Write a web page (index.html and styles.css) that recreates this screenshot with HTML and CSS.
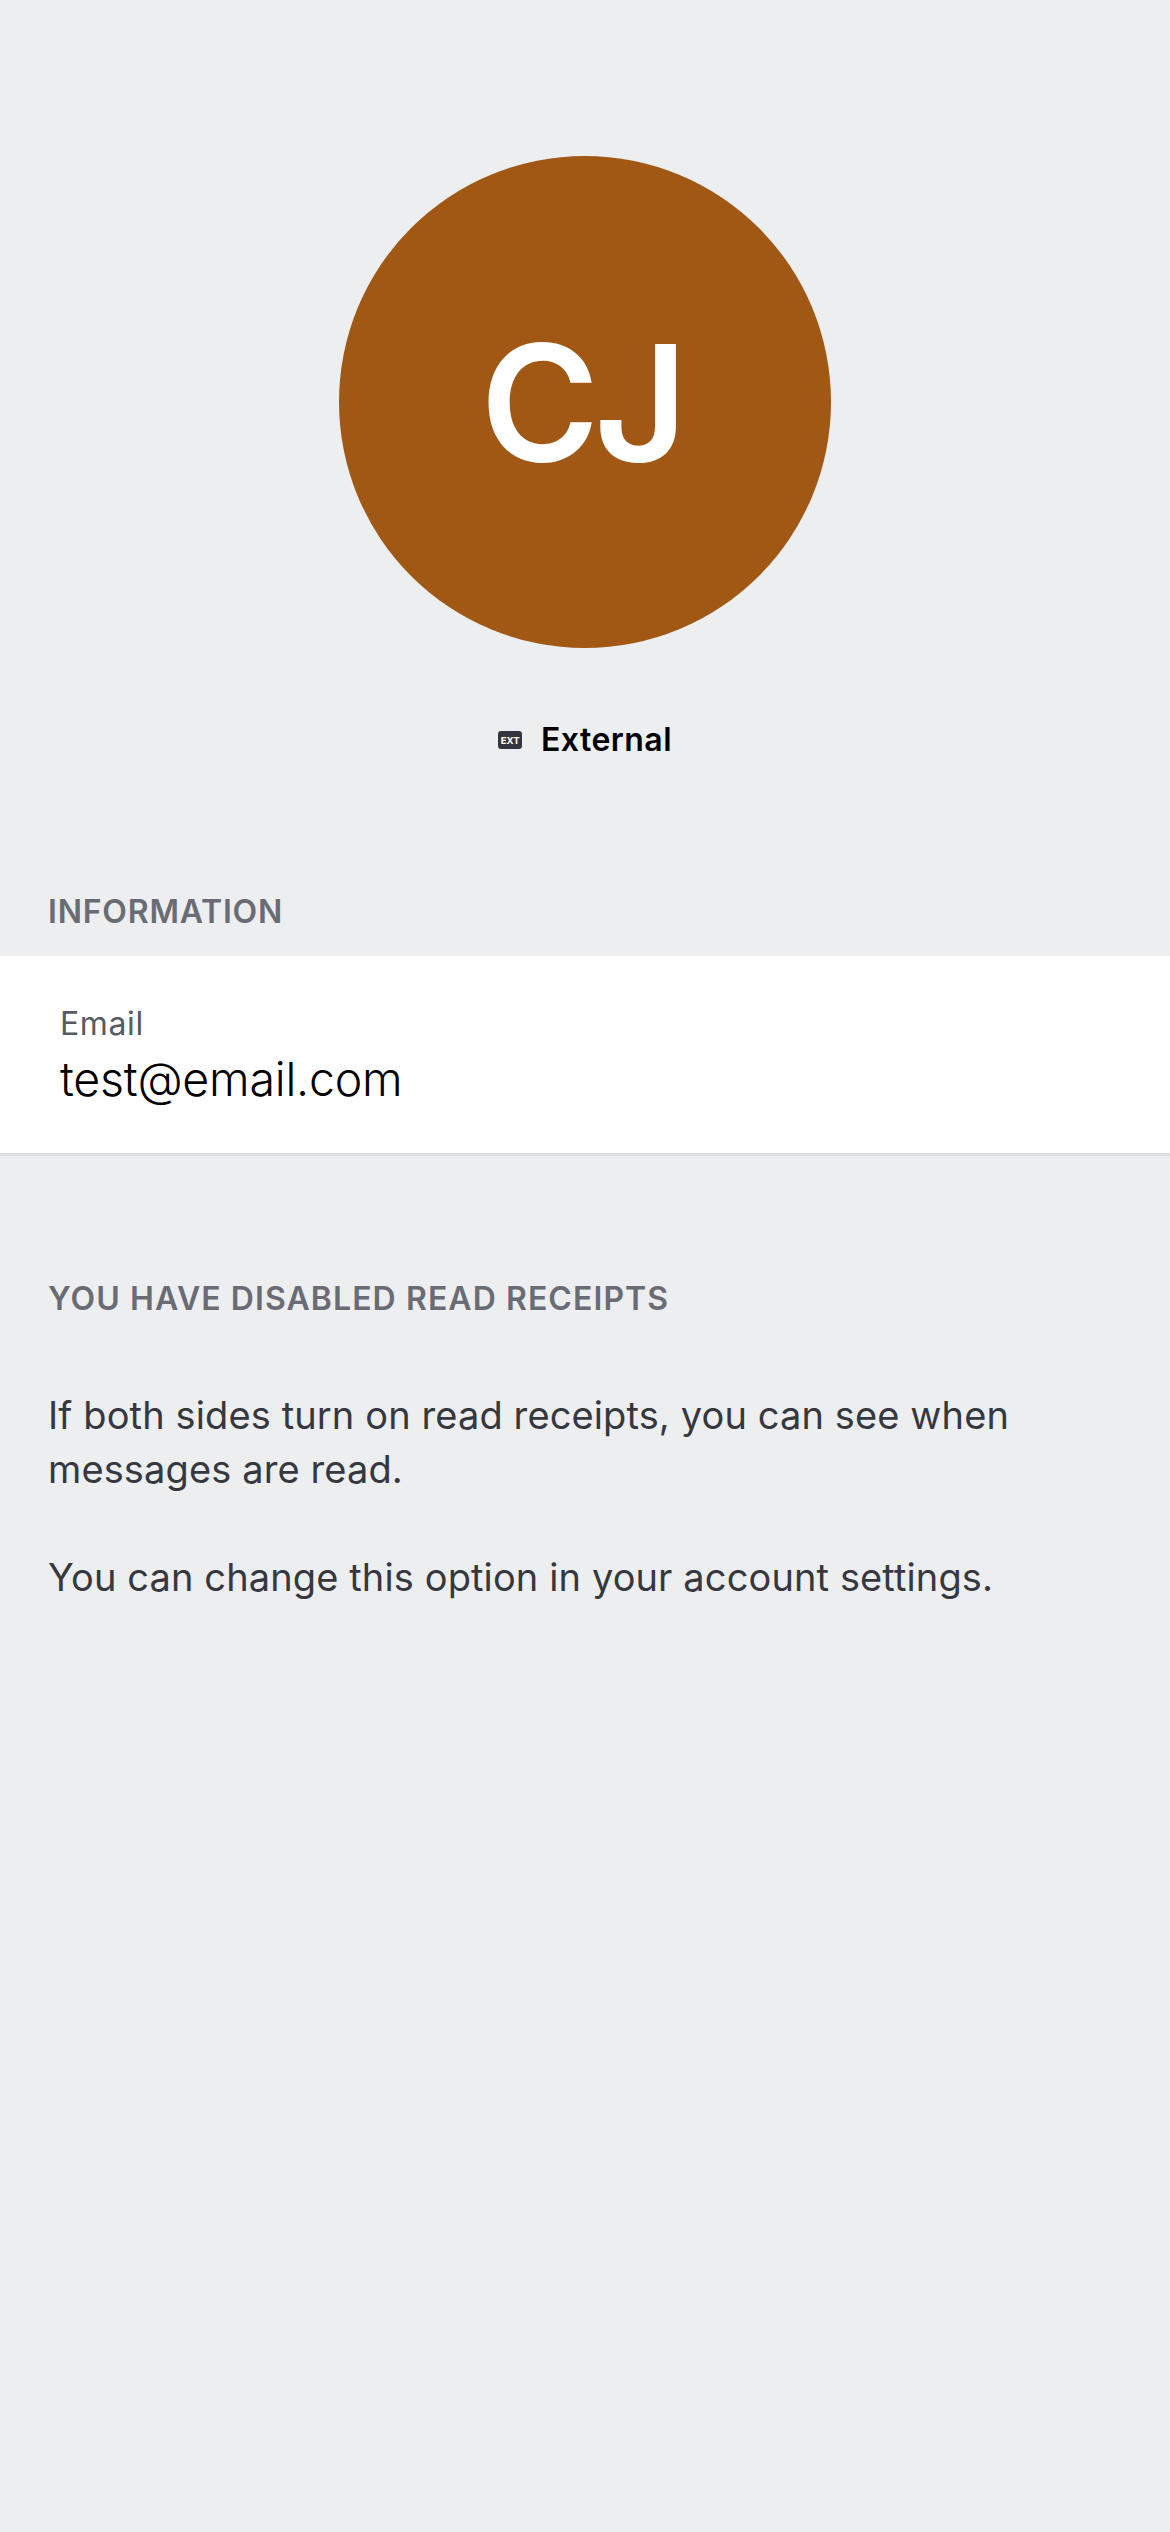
FILE: index.html
```html
<!DOCTYPE html>
<html lang="en">
<head>
<meta charset="utf-8">
<title>Profile</title>
<link rel="stylesheet" href="styles.css">
</head>
<body>
<main class="profile">
  <div class="avatar"><span class="initials">CJ</span></div>
  <div class="status">
    <svg class="ext-badge" width="24" height="18" viewBox="0 0 24 18" role="img" aria-label="External">
      <rect width="24" height="18" rx="3" fill="#33363f"/>
      <text x="12.2" y="13.2" text-anchor="middle" textLength="19" lengthAdjust="spacingAndGlyphs" class="ext-label">EXT</text>
    </svg>
    <span class="status-text">External</span>
  </div>
  <h2 class="section-title">INFORMATION</h2>
  <section class="card">
    <div class="label">Email</div>
    <div class="value">test@email.com</div>
  </section>
  <h2 class="section-title receipts-title">YOU HAVE DISABLED READ RECEIPTS</h2>
  <div class="note">
    <p>If both sides turn on read receipts, you can see when<br>messages are read.</p>
    <p>You can change this option in your account settings.</p>
  </div>
</main>
</body>
</html>
```
FILE: styles.css
```css
* { box-sizing: border-box; margin: 0; }
body { background: #edeef0; font-family: Inter, "Liberation Sans", sans-serif; }
.profile { min-height: 2532px; padding-top: 156px; display: flex; flex-direction: column; }
.avatar { width: 492px; height: 492px; padding: 0 7px 0 0; border-radius: 50%; background: #a15814; color: #fff; align-self: center; display: flex; align-items: center; justify-content: center; }
.initials { font-size: 161px; font-weight: 600; letter-spacing: -5px; line-height: 1; }
.status { height: 44px; margin-top: 70px; display: flex; align-items: center; justify-content: center; gap: 19px; }
.ext-badge { flex: none; }
.ext-label { font-size: 9.5px; font-weight: 700; fill: #fff; }
.status-text { font-size: 32px; font-weight: 600; line-height: 44px; letter-spacing: .45px; color: #000; }
.section-title { margin: 128px 0 0 48px; font-size: 32px; line-height: 44px; height: 66px; font-weight: 600; letter-spacing: .8px; color: #696c74; white-space: nowrap; }
.card { height: 200px; padding: 46px 60px 0; background: #fff; border-bottom: 3px solid #dcdee0; }
.label { font-size: 32px; line-height: 44px; letter-spacing: .6px; color: #565a61; }
.value { font-size: 46.5px; line-height: 66px; font-weight: 300; letter-spacing: -.22px; color: #000; }
.receipts-title { margin-top: 121px; letter-spacing: 1.07px; }
.note { margin: 45px 0 0 48px; color: #36383f; font-size: 38px; line-height: 54px; letter-spacing: .12px; white-space: nowrap; }
.note p + p { margin-top: 54px; }
```
